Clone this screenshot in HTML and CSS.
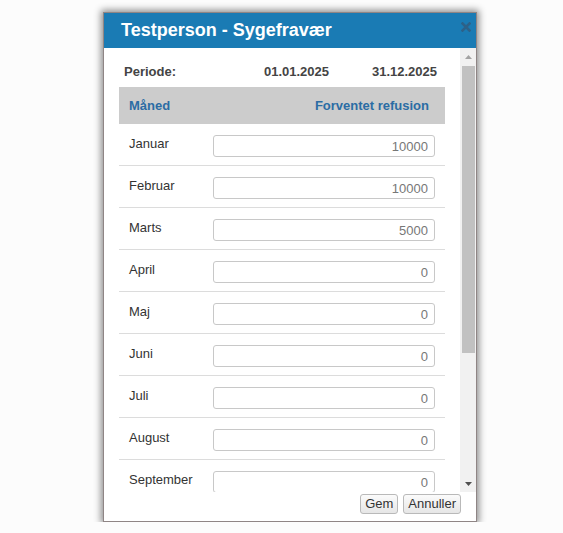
FILE: index.html
```html
<!DOCTYPE html>
<html lang="da">
<head>
<meta charset="utf-8">
<title>Testperson - Sygefravær</title>
<link rel="stylesheet" href="styles.css">
</head>
<body>
<div class="page">
  <div class="dialog">
    <div class="dlg-header">
      <span class="dlg-title">Testperson - Sygefravær</span>
      <span class="dlg-close" aria-label="Luk">
        <svg width="10" height="10" viewBox="0 0 10 10"><path d="M1.5 1.5 L8.5 8.5 M8.5 1.5 L1.5 8.5" stroke="#2d6188" stroke-width="2.6" stroke-linecap="square" fill="none"/></svg>
      </span>
    </div>
    <div class="dlg-body">
      <div class="scroll-area">
        <div class="period">
          <span class="period-label">Periode:</span>
          <span class="period-from">01.01.2025</span>
          <span class="period-to">31.12.2025</span>
        </div>
        <div class="thead">
          <span>Måned</span>
          <span>Forventet refusion</span>
        </div>
        <div class="row"><span class="month">Januar</span><input class="amount" value="10000"></div>
        <div class="row"><span class="month">Februar</span><input class="amount" value="10000"></div>
        <div class="row"><span class="month">Marts</span><input class="amount" value="5000"></div>
        <div class="row"><span class="month">April</span><input class="amount" value="0"></div>
        <div class="row"><span class="month">Maj</span><input class="amount" value="0"></div>
        <div class="row"><span class="month">Juni</span><input class="amount" value="0"></div>
        <div class="row"><span class="month">Juli</span><input class="amount" value="0"></div>
        <div class="row"><span class="month">August</span><input class="amount" value="0"></div>
        <div class="row"><span class="month">September</span><input class="amount" value="0"></div>
      </div>
      <div class="scrollbar">
        <div class="sb-btn"><svg width="7" height="4" viewBox="0 0 7 4"><path d="M0 4 L3.5 0 L7 4 Z" fill="#a3a3a3"/></svg></div>
        <div class="sb-track"><div class="sb-thumb"></div></div>
        <div class="sb-btn"><svg width="7" height="4" viewBox="0 0 7 4"><path d="M0 0 L3.5 4 L7 0 Z" fill="#505050"/></svg></div>
      </div>
    </div>
    <div class="dlg-footer">
      <button class="btn">Gem</button>
      <button class="btn">Annuller</button>
    </div>
  </div>
</div>
</body>
</html>
```
FILE: styles.css
```css
* { box-sizing: border-box; }
html, body { margin: 0; padding: 0; }
body {
  background: #fcfcfc;
  font-family: "Liberation Sans", Arial, sans-serif;
  font-size: 13px;
  color: #333;
}
.page {
  padding: 12px 0 0 103px;
}
.dialog {
  width: 374px;
  height: 510px;
  border: 1px solid #8f8585;
  background: #fff;
  box-shadow: 0 0 7px 2px rgba(0,0,0,0.45);
  display: flex;
  flex-direction: column;
}
.dlg-header {
  height: 35px;
  flex: none;
  background: #1a7bb4;
  display: flex;
  justify-content: space-between;
  padding: 0 5px 0 17px;
}
.dlg-title {
  color: #fff;
  font-weight: bold;
  font-size: 18px;
  line-height: 35px;
}
.dlg-close {
  display: flex;
  margin-top: 9px;
  width: 10px;
  height: 10px;
}
.dlg-body {
  height: 444px;
  flex: none;
  display: flex;
}
.scroll-area {
  flex: 1;
  overflow: hidden;
  padding: 0 15px;
}
.period {
  display: flex;
  font-weight: bold;
  color: #444;
  line-height: 16px;
  padding: 16px 8px 0 5px;
  margin-bottom: 7px;
}
.period-label { flex: 1; }
.period-to { width: 108px; text-align: right; }
.thead {
  height: 37px;
  background: #cccccc;
  display: flex;
  justify-content: space-between;
  align-items: center;
  padding: 0 16px 0 10px;
  color: #2b6ca4;
  font-weight: bold;
}
.row {
  height: 42px;
  border-bottom: 1px solid #dcdcdc;
  display: flex;
  align-items: flex-start;
  padding: 0 10px;
}
.month {
  width: 84px;
  padding-top: 12px;
  line-height: 16px;
  color: #333;
}
.amount {
  width: 222px;
  height: 22px;
  margin-top: 11px;
  border: 1px solid #c8c8c8;
  border-radius: 3px;
  padding: 0 6px;
  text-align: right;
  font-family: "Liberation Sans", Arial, sans-serif;
  font-size: 13px;
  color: #777;
  background: #fff;
  outline: none;
}
.scrollbar {
  width: 16px;
  flex: none;
  background: #f1f1f1;
  display: flex;
  flex-direction: column;
}
.sb-btn {
  height: 17px;
  flex: none;
  display: flex;
  align-items: center;
  justify-content: center;
}
.sb-track {
  flex: 1;
  padding: 1px 1px 0 2px;
}
.sb-thumb {
  height: 287px;
  background: #c1c1c1;
}
.dlg-footer {
  flex: 1;
  display: flex;
  justify-content: flex-end;
  align-items: flex-start;
  gap: 5px;
  padding: 2px 15px 0 0;
}
.btn {
  height: 20px;
  padding: 0 4px;
  border: 1px solid #b9b9b9;
  border-radius: 3px;
  background: linear-gradient(#fbfbfb, #e6e6e6);
  font-family: "Liberation Sans", Arial, sans-serif;
  font-size: 13px;
  color: #333;
  line-height: 18px;
}
```
